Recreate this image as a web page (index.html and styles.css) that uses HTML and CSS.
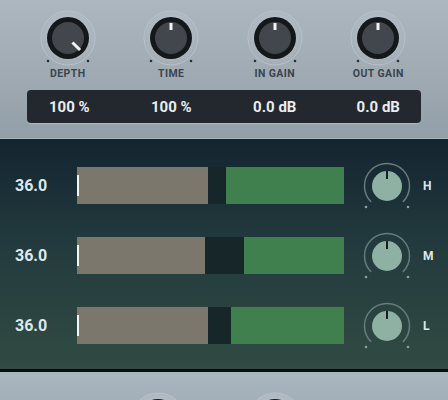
FILE: index.html
```html
<!DOCTYPE html>
<html>
<head>
<meta charset="utf-8">
<link rel="stylesheet" href="styles.css">
</head>
<body>
<div class="app">
  <section class="top">
    <div class="knobs">
      <div class="kcell">
        <svg class="knob" viewBox="-28 -28 56 56" width="56" height="56">
          <defs>
            <radialGradient id="halo" cx="0.5" cy="0.4" r="0.6">
              <stop offset="0" stop-color="#c3ccd3"/>
              <stop offset="1" stop-color="#a3adb6"/>
            </radialGradient>
          </defs>
          <circle r="27" fill="url(#halo)" stroke="#b9c2c9" stroke-width="1"/>
          <circle r="21" fill="#15181b"/>
          <circle r="16" fill="#42474d"/>
          <circle cx="-20" cy="23" r="1.3" fill="#2c3238"/>
          <circle cx="20" cy="23" r="1.3" fill="#2c3238"/>
          <line x1="5.5" y1="5.5" x2="11" y2="11" stroke="#f2f2f2" stroke-width="3" stroke-linecap="square"/>
        </svg>
        <div class="klabel">DEPTH</div>
      </div>
      <div class="kcell">
        <svg class="knob" viewBox="-28 -28 56 56" width="56" height="56">
          <circle r="27" fill="url(#halo)" stroke="#b9c2c9" stroke-width="1"/>
          <circle r="21" fill="#15181b"/>
          <circle r="16" fill="#42474d"/>
          <circle cx="-20" cy="23" r="1.3" fill="#2c3238"/>
          <circle cx="20" cy="23" r="1.3" fill="#2c3238"/>
          <line x1="0" y1="-8" x2="0" y2="-15" stroke="#f2f2f2" stroke-width="3"/>
        </svg>
        <div class="klabel">TIME</div>
      </div>
      <div class="kcell">
        <svg class="knob" viewBox="-28 -28 56 56" width="56" height="56">
          <circle r="27" fill="url(#halo)" stroke="#b9c2c9" stroke-width="1"/>
          <circle r="21" fill="#15181b"/>
          <circle r="16" fill="#42474d"/>
          <circle cx="-20" cy="23" r="1.3" fill="#2c3238"/>
          <circle cx="20" cy="23" r="1.3" fill="#2c3238"/>
          <line x1="0" y1="-8" x2="0" y2="-15" stroke="#f2f2f2" stroke-width="3"/>
        </svg>
        <div class="klabel">IN GAIN</div>
      </div>
      <div class="kcell">
        <svg class="knob" viewBox="-28 -28 56 56" width="56" height="56">
          <circle r="27" fill="url(#halo)" stroke="#b9c2c9" stroke-width="1"/>
          <circle r="21" fill="#15181b"/>
          <circle r="16" fill="#42474d"/>
          <circle cx="-20" cy="23" r="1.3" fill="#2c3238"/>
          <circle cx="20" cy="23" r="1.3" fill="#2c3238"/>
          <line x1="0" y1="-8" x2="0" y2="-15" stroke="#f2f2f2" stroke-width="3"/>
        </svg>
        <div class="klabel">OUT GAIN</div>
      </div>
    </div>
    <div class="display">
      <div class="values">
        <span>100 %</span>
        <span>100 %</span>
        <span>0.0 dB</span>
        <span>0.0 dB</span>
      </div>
    </div>
  </section>

  <section class="bands">
    <div class="row">
      <div class="num">36.0</div>
      <div class="bar">
        <div class="cursor"></div>
        <div class="seg-gray" style="width:131px"></div>
        <div class="seg-gap" style="width:18px"></div>
        <div class="seg-green"></div>
      </div>
      <svg class="mknob" viewBox="-25 -25 50 50" width="50" height="50">
        <path d="M -15.9 15.9 A 22.5 22.5 0 1 1 15.9 15.9" fill="none" stroke="#647c7e" stroke-width="1.5"/>
        <circle cx="-21" cy="21" r="1.3" fill="#8aa0a2"/>
        <circle cx="21" cy="21" r="1.3" fill="#8aa0a2"/>
        <circle r="15" fill="#8fb1a4"/>
        <line x1="0" y1="-15" x2="0" y2="-7" stroke="#15201f" stroke-width="2"/>
      </svg>
      <div class="band">H</div>
    </div>
    <div class="row">
      <div class="num">36.0</div>
      <div class="bar">
        <div class="cursor"></div>
        <div class="seg-gray" style="width:128px"></div>
        <div class="seg-gap" style="width:39px"></div>
        <div class="seg-green"></div>
      </div>
      <svg class="mknob" viewBox="-25 -25 50 50" width="50" height="50">
        <path d="M -15.9 15.9 A 22.5 22.5 0 1 1 15.9 15.9" fill="none" stroke="#647c7e" stroke-width="1.5"/>
        <circle cx="-21" cy="21" r="1.3" fill="#8aa0a2"/>
        <circle cx="21" cy="21" r="1.3" fill="#8aa0a2"/>
        <circle r="15" fill="#8fb1a4"/>
        <line x1="0" y1="-15" x2="0" y2="-7" stroke="#15201f" stroke-width="2"/>
      </svg>
      <div class="band">M</div>
    </div>
    <div class="row">
      <div class="num">36.0</div>
      <div class="bar">
        <div class="cursor"></div>
        <div class="seg-gray" style="width:131px"></div>
        <div class="seg-gap" style="width:23px"></div>
        <div class="seg-green"></div>
      </div>
      <svg class="mknob" viewBox="-25 -25 50 50" width="50" height="50">
        <path d="M -15.9 15.9 A 22.5 22.5 0 1 1 15.9 15.9" fill="none" stroke="#647c7e" stroke-width="1.5"/>
        <circle cx="-21" cy="21" r="1.3" fill="#8aa0a2"/>
        <circle cx="21" cy="21" r="1.3" fill="#8aa0a2"/>
        <circle r="15" fill="#8fb1a4"/>
        <line x1="0" y1="-15" x2="0" y2="-7" stroke="#15201f" stroke-width="2"/>
      </svg>
      <div class="band">L</div>
    </div>
  </section>

  <section class="bottom">
    <svg class="knob" viewBox="-28 -28 56 56" width="56" height="56">
      <circle r="27" fill="url(#halo)" stroke="#b9c2c9" stroke-width="1"/>
      <circle r="21" fill="#15181b"/>
      <circle r="16" fill="#42474d"/>
    </svg>
    <svg class="knob" viewBox="-28 -28 56 56" width="56" height="56">
      <circle r="27" fill="url(#halo)" stroke="#b9c2c9" stroke-width="1"/>
      <circle r="21" fill="#15181b"/>
      <circle r="16" fill="#42474d"/>
    </svg>
  </section>
</div>
</body>
</html>
```

FILE: styles.css
```css
* { box-sizing: border-box; }
html, body {
  margin: 0;
  padding: 0;
  width: 448px;
  height: 400px;
  overflow: hidden;
  background: #a6b2bc;
  font-family: Roboto, "Liberation Sans", sans-serif;
}
.app {
  width: 448px;
  height: 400px;
  display: flex;
  flex-direction: column;
  overflow: hidden;
}
.top {
  height: 139px;
  flex: none;
  background: linear-gradient(#adb7c0, #939fa8);
  border-bottom: 1px solid #a9b3ba;
  padding: 10px 18px 0 16px;
}
.knobs {
  display: grid;
  grid-template-columns: repeat(4, 1fr);
}
.kcell {
  display: flex;
  flex-direction: column;
  align-items: center;
}
.knob { display: block; flex: none; }
.klabel {
  margin-top: 2px;
  font-size: 10.5px;
  line-height: 12px;
  font-weight: 700;
  letter-spacing: 0.4px;
  color: #3a4450;
}
.display {
  margin: 10px 9px 0 11px;
  height: 33px;
  background: #22282e;
  border-radius: 4px;
  box-shadow: 0 1px 0 rgba(255,255,255,0.25);
}
.values {
  margin: 0 -9px 0 -11px;
  height: 33px;
  display: grid;
  grid-template-columns: repeat(4, 1fr);
  align-items: center;
  justify-items: center;
  font-size: 15px;
  font-weight: 700;
  color: #e9edf0;
}
.values span:nth-child(1) { margin-left: 3px; }
.bands {
  height: 233px;
  flex: none;
  background: linear-gradient(#142430, #223a3d 45%, #314b43);
  border-bottom: 3px solid #0b0f10;
  padding-top: 28px;
  display: flex;
  flex-direction: column;
  gap: 33px;
}
.row {
  height: 37px;
  display: flex;
  align-items: center;
  padding-left: 15px;
}
.num {
  width: 62px;
  font-size: 16px;
  font-weight: 700;
  color: #dde8ec;
}
.bar {
  position: relative;
  width: 267px;
  height: 37px;
  display: flex;
}
.cursor {
  position: absolute;
  left: 0;
  top: 8px;
  width: 2px;
  height: 21px;
  background: #f4f4f4;
}
.seg-gray { background: #7b776c; }
.seg-gap { background: #172629; }
.seg-green { flex: 1; background: #40804f; }
.mknob {
  display: block;
  flex: none;
  margin-left: 18px;
}
.band {
  margin-left: 11px;
  font-size: 12px;
  font-weight: 700;
  color: #dfe7e9;
}
.bottom {
  flex: 1;
  min-height: 0;
  overflow: hidden;
  background: linear-gradient(#a9b5bf, #a3afb9);
  display: flex;
  align-items: flex-start;
  gap: 61px;
  padding: 20px 0 0 130px;
}
```
